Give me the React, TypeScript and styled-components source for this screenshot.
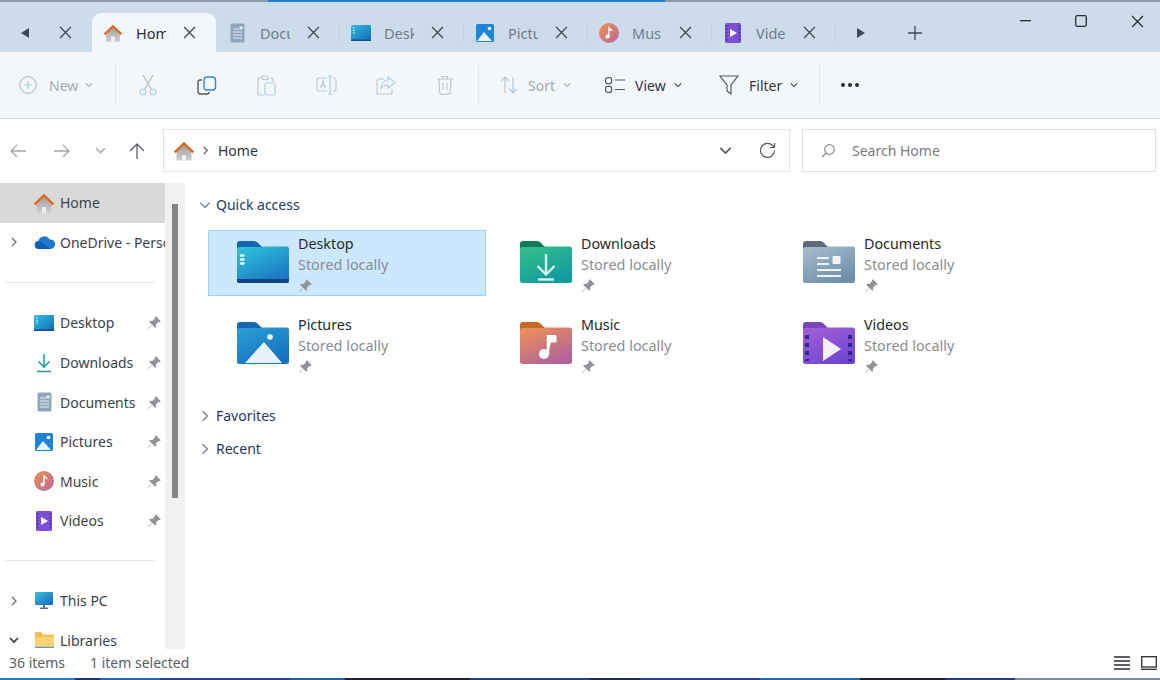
import * as React from 'react';
import styled, { createGlobalStyle } from 'styled-components';

const GlobalStyle = createGlobalStyle`
  html, body {
    margin: 0;
    padding: 0;
    background: #fff;
  }
  * {
    box-sizing: border-box;
  }
`;

const Window = styled.div`
  width: 1160px;
  height: 680px;
  display: flex;
  flex-direction: column;
  overflow: hidden;
  background: #fff;
  font-family: 'Noto Sans', 'Open Sans', sans-serif;
  font-size: 14px;
  color: #3c4149;
`;

const WallpaperStrip = styled.div<{ $h: number; $bg: string }>`
  height: ${p => p.$h}px;
  flex: none;
  background: ${p => p.$bg};
`;

/* ---------- tab strip ---------- */

const TabStrip = styled.div`
  height: 50px;
  flex: none;
  display: flex;
  align-items: flex-end;
  background: #cddcea;
`;

const ScrollTab = styled.div<{ $w: number; $mr?: number }>`
  width: ${p => p.$w}px;
  margin-right: ${p => p.$mr ?? 0}px;
  height: 39px;
  flex: none;
  display: flex;
  align-items: center;
  justify-content: center;
  color: #3f4a57;
`;

const Tab = styled.div<{ $active?: boolean }>`
  width: 124px;
  height: 39px;
  flex: none;
  display: flex;
  align-items: center;
  padding-left: 11px;
  border-radius: 9px 9px 0 0;
  background: ${p => (p.$active ? '#f3f6fb' : 'transparent')};
  position: relative;

  &::after {
    content: '';
    display: ${p => (p.$active ? 'none' : 'block')};
    position: absolute;
    right: 0;
    top: 11px;
    width: 1px;
    height: 17px;
    background: #bfcfde;
  }
`;

const TabIcon = styled.div`
  width: 20px;
  height: 20px;
  flex: none;
  display: flex;
  align-items: center;
  justify-content: center;
`;

const TabLabel = styled.div<{ $active?: boolean }>`
  width: 30px;
  margin-left: 13px;
  flex: none;
  overflow: hidden;
  white-space: nowrap;
  font-size: 14.5px;
  color: ${p => (p.$active ? '#2a2d33' : '#6f7b89')};
`;

const TabClose = styled.div`
  margin-left: 15px;
  width: 16px;
  height: 16px;
  flex: none;
  display: flex;
  align-items: center;
  justify-content: center;
  color: #434a53;
`;

const TabSpacer = styled.div`
  flex: 1;
`;

const WindowControls = styled.div`
  display: flex;
  gap: 10px;
  align-self: flex-start;
  padding-top: 9px;
`;

const WindowButton = styled.div`
  width: 46px;
  height: 20px;
  display: flex;
  align-items: center;
  justify-content: center;
  color: #2a2d33;
`;

/* ---------- command bar ---------- */

const CommandBar = styled.div`
  height: 67px;
  flex: none;
  display: flex;
  align-items: center;
  background: #f3f6fb;
  border-bottom: 1px solid #d3d8de;
`;

const NewButton = styled.div`
  width: 115px;
  flex: none;
  display: flex;
  align-items: center;
  padding-left: 19px;
  color: #a4a9af;
  font-size: 14px;
`;

const NewLabel = styled.span`
  margin-left: 12px;
  margin-right: 7px;
`;

const CommandDivider = styled.div`
  width: 1px;
  height: 40px;
  flex: none;
  background: #e2e6eb;
`;

const IconCommands = styled.div`
  display: flex;
  padding-left: 2px;
  margin-right: 3px;
`;

const IconCommand = styled.div`
  width: 59.5px;
  height: 24px;
  display: flex;
  align-items: center;
  justify-content: center;
`;

const MenuCommands = styled.div`
  display: flex;
  padding-left: 21px;
`;

const MenuCommand = styled.div<{ $muted?: boolean; $w: number }>`
  width: ${p => p.$w}px;
  flex: none;
  display: flex;
  align-items: center;
  color: ${p => (p.$muted ? '#a4a9af' : '#33373d')};
`;

const MenuLabel = styled.span`
  margin-left: 10px;
  margin-right: 8px;
`;

const MoreButton = styled.div`
  margin-left: 21px;
  display: flex;
  align-items: center;
  gap: 3px;
`;

const Dot = styled.span`
  width: 4px;
  height: 4px;
  border-radius: 50%;
  background: #2a2d33;
`;

/* ---------- address row ---------- */

const AddressRow = styled.div`
  height: 64px;
  flex: none;
  display: flex;
  padding-top: 10px;
  background: #fff;
`;

const NavButton = styled.div<{ $w: number }>`
  width: ${p => p.$w}px;
  height: 43px;
  flex: none;
  display: flex;
  align-items: center;
  justify-content: center;
`;

const AddressBox = styled.div`
  width: 627px;
  height: 43px;
  margin-left: 1px;
  flex: none;
  display: flex;
  align-items: center;
  padding-left: 9px;
  border: 1px solid #e0e3e7;
  background: #fff;
  color: #33373d;
`;

const CrumbChevron = styled.span`
  margin-left: 6px;
  display: flex;
  color: #55595f;
`;

const Crumb = styled.span`
  margin-left: 8px;
  flex: 1;
`;

const AddressAction = styled.div<{ $w: number }>`
  width: ${p => p.$w}px;
  flex: none;
  display: flex;
  align-items: center;
  justify-content: center;
`;

const SearchBox = styled.div`
  width: 354px;
  height: 43px;
  margin-left: 12px;
  flex: none;
  display: flex;
  align-items: center;
  padding-left: 18px;
  border: 1px solid #dcdfe3;
  color: #777b81;
`;

const SearchText = styled.span`
  margin-left: 17px;
`;

/* ---------- body ---------- */

const Body = styled.div`
  flex: 1;
  min-height: 0;
  display: flex;
`;

const Sidebar = styled.nav`
  width: 165px;
  flex: none;
  overflow: hidden;
`;

const NavRow = styled.div<{ $active?: boolean }>`
  height: 39.6px;
  display: flex;
  align-items: center;
  background: ${p => (p.$active ? '#d9d9d9' : 'transparent')};
`;

const NavChevron = styled.div`
  width: 30px;
  flex: none;
  display: flex;
  justify-content: center;
  color: #6a6e74;
  padding-right: 2px;
`;

const NavIcon = styled.div`
  width: 28px;
  height: 22px;
  flex: none;
  display: flex;
  align-items: center;
  justify-content: center;
`;

const NavLabel = styled.div`
  margin-left: 2px;
  flex: 1;
  min-width: 0;
  white-space: nowrap;
  overflow: hidden;
  color: #3c4149;
`;

const NavPin = styled.div`
  width: 22px;
  flex: none;
  display: flex;
  justify-content: center;
`;

const NavDivider = styled.div<{ $h: number }>`
  height: ${p => p.$h}px;
  display: flex;
  align-items: center;
  padding: 0 10px 0 5px;

  &::after {
    content: '';
    flex: 1;
    height: 1px;
    background: #e3e3e3;
  }
`;

const ScrollTrack = styled.div`
  width: 20px;
  flex: none;
  padding: 21px 7px 0;
  background: #f1f1f1;
`;

const ScrollThumb = styled.div`
  height: 294px;
  background: #868686;
`;

const Content = styled.main`
  flex: 1;
  padding-top: 5px;
`;

const SectionHeader = styled.div<{ $top?: number }>`
  height: 33px;
  margin-top: ${p => p.$top ?? 0}px;
  display: flex;
  align-items: center;
  padding-left: 14px;
  color: #1f3864;
`;

const SectionTitle = styled.span`
  margin-left: 5px;
`;

const TileGrid = styled.div`
  margin: 9px 0 0 23px;
  display: grid;
  grid-template-columns: repeat(3, 278px);
  grid-auto-rows: 66px;
  column-gap: 5px;
  row-gap: 15px;
`;

const Tile = styled.div<{ $selected?: boolean }>`
  display: flex;
  padding: 3px 0 0 28px;
  border: 1px solid ${p => (p.$selected ? '#99d1ff' : 'transparent')};
  background: ${p => (p.$selected ? '#cce8ff' : 'transparent')};
`;

const TileIcon = styled.div`
  width: 52px;
  height: 42px;
  margin-top: 7px;
  flex: none;
`;

const TileText = styled.div`
  margin-left: 9px;
  display: flex;
  flex-direction: column;
`;

const TileName = styled.div`
  line-height: 20px;
  font-size: 14.3px;
  color: #24282e;
`;

const TileSub = styled.div`
  line-height: 21px;
  font-size: 14.4px;
  color: #8a8d91;
`;

const TilePin = styled.div`
  height: 20px;
  display: flex;
  align-items: center;
`;

/* ---------- status bar ---------- */

const StatusBar = styled.footer`
  height: 29px;
  flex: none;
  display: flex;
  align-items: center;
  padding: 0 3px 2px 9px;
  color: #5a5e64;
`;

const StatusText = styled.span<{ $w?: number }>`
  width: ${p => (p.$w ? `${p.$w}px` : 'auto')};
`;

const StatusIcons = styled.div`
  margin-left: auto;
  display: flex;
  align-items: center;
  gap: 11px;
`;

/* ---------- icons ---------- */

const Chevron = ({ dir = 'down', size = 10, color = 'currentColor', sw = 1.3 }: { dir?: 'down' | 'right'; size?: number; color?: string; sw?: number }) => (
  <svg width={size} height={size} viewBox="0 0 10 10" fill="none" stroke={color} strokeWidth={sw}>
    {dir === 'down' ? <path d="M1 3l4 4 4-4" /> : <path d="M3 1l4 4-4 4" />}
  </svg>
);

const Close = ({ size = 12, sw = 1.2 }: { size?: number; sw?: number }) => (
  <svg width={size} height={size} viewBox="0 0 12 12" fill="none" stroke="currentColor" strokeWidth={sw}>
    <path d="M1 1l10 10M11 1L1 11" />
  </svg>
);

const Pin = () => (
  <svg width="15" height="15" viewBox="0 0 14 14" fill="#8f9296">
    <path d="M8.2 1.2l4.6 4.6-1 .9-.9-.3-2.500 2.500.2 2-1 1-2.700-2.700L1.600 12.800l-.5-.4 3.600-3.300L2 6.400l1-1 2 .2 2.500-2.500-.2-.9z" />
  </svg>
);

const HomeIcon = ({ size = 22 }: { size?: number }) => (
  <svg width={size} height={size} viewBox="0 0 22 22">
    <defs>
      <linearGradient id="home-body" x1="0" y1="0" x2="0" y2="1">
        <stop offset="0" stopColor="#9c9c9c" />
        <stop offset="1" stopColor="#cfcfcf" />
      </linearGradient>
    </defs>
    <path d="M3.500 10L11 3.500l7.500 6.500v10.500H13V15H9v5.500H3.500z" fill="url(#home-body)" />
    <path d="M9 15h4v5.500H9z" fill="#efefef" />
    <path d="M.8 11.500L11 1.800l10.200 9.700-1.700 1.800L11 5.300 2.500 13.300z" fill="#dd6a1e" />
  </svg>
);

const DocIcon = ({ w = 15, h = 20 }: { w?: number; h?: number }) => (
  <svg width={w} height={h} viewBox="0 0 15 20">
    <rect x="0.500" y="0.500" width="14" height="19" rx="1.500" fill="#8ea5bb" />
    <path d="M3 6h6M3 9h9M3 12h9M3 15h9" stroke="#e7edf3" strokeWidth="1" />
    <rect x="9.500" y="3.500" width="3" height="3" fill="#e7edf3" />
  </svg>
);

const DesktopSmall = () => (
  <svg width="20" height="16" viewBox="0 0 20 16">
    <defs>
      <linearGradient id="ds" x1="0" y1="0" x2="1" y2="1">
        <stop offset="0" stopColor="#31c0de" />
        <stop offset="1" stopColor="#1368b8" />
      </linearGradient>
    </defs>
    <rect width="20" height="16" rx="1.500" fill="url(#ds)" />
    <rect y="14.500" width="20" height="1.500" fill="#174a8c" />
    <path d="M2 3h1.500M2 5.500h1.500M2 8h1.500" stroke="#e6f7fc" strokeWidth="1.200" />
  </svg>
);

const PicturesSmall = ({ size = 18 }: { size?: number }) => (
  <svg width={size} height={size} viewBox="0 0 18 18">
    <rect width="18" height="18" rx="1.500" fill="#1d84d6" />
    <circle cx="13.500" cy="4.500" r="1.800" fill="#fff" />
    <path d="M1 17l7-9 8 9z" fill="#e9f3fb" />
  </svg>
);

const MusicSmall = ({ size = 20 }: { size?: number }) => (
  <svg width={size} height={size} viewBox="0 0 20 20">
    <defs>
      <linearGradient id="ms" x1="0" y1="0" x2="1" y2="1">
        <stop offset="0" stopColor="#ee8f4f" />
        <stop offset="1" stopColor="#b86aa0" />
      </linearGradient>
    </defs>
    <circle cx="10" cy="10" r="10" fill="url(#ms)" />
    <circle cx="8.500" cy="13.500" r="2" fill="#fff" />
    <path d="M10 13.500V5c1 1.500 2.500 1.500 3 3" stroke="#fff" strokeWidth="1.300" fill="none" />
  </svg>
);

const VideoSmall = ({ w = 16, h = 20 }: { w?: number; h?: number }) => (
  <svg width={w} height={h} viewBox="0 0 16 20">
    <rect width="16" height="20" rx="1.500" fill="#7d4fd6" />
    <path d="M5 6l7 4-7 4z" fill="#fff" />
    <path d="M1.500 2v16M14.500 2v16" stroke="#3a2a96" strokeWidth="1.400" strokeDasharray="1.500 2" />
  </svg>
);

const DownloadSmall = () => (
  <svg width="18" height="20" viewBox="0 0 18 20" fill="none" stroke="#1ea899" strokeWidth="1.600">
    <path d="M9 1v13M3.500 8.500L9 14l5.500-5.500" />
    <path d="M2 18.500h14" stroke="#3f8fa8" />
  </svg>
);

const CloudIcon = () => (
  <svg width="21" height="14" viewBox="0 0 21 14">
    <path d="M5 14a4 4 0 01-.6-8A6 6 0 0115.500 4.500 4.800 4.800 0 0117 14z" fill="#1a78d0" />
    <path d="M5 14a4 4 0 01-1-7.800c3 .5 6 3 8 4.500l4 3.300z" fill="#0f5fb5" />
  </svg>
);

const MonitorIcon = () => (
  <svg width="18" height="17" viewBox="0 0 18 17">
    <defs>
      <linearGradient id="mon" x1="0" y1="0" x2="1" y2="1">
        <stop offset="0" stopColor="#35c3dc" />
        <stop offset="1" stopColor="#1466bd" />
      </linearGradient>
    </defs>
    <rect width="18" height="13" rx="1" fill="url(#mon)" />
    <path d="M8 13h2v2.500H8zM5 15.500h8V17H5z" fill="#5f6b78" />
  </svg>
);

const LibraryIcon = () => (
  <svg width="19" height="16" viewBox="0 0 19 16">
    <path d="M1 0h5l2 2.500h10a1 1 0 011 1V15a1 1 0 01-1 1H1a1 1 0 01-1-1V1a1 1 0 011-1z" fill="#f2c04e" />
    <path d="M0 5h19v10a1 1 0 01-1 1H1a1 1 0 01-1-1z" fill="#fbd376" />
    <rect y="14.800" width="19" height="1.200" fill="#5b9bd5" />
  </svg>
);

const FOLDERS = {
  desktop: { tab: '#1566b6', from: '#2fc4da', to: '#1a74c2' },
  downloads: { tab: '#157a5a', from: '#34c08a', to: '#0f9aa0' },
  documents: { tab: '#5c6c80', from: '#a6bccd', to: '#6d8ea8' },
  pictures: { tab: '#1566b6', from: '#2a9ed4', to: '#1670c0' },
  music: { tab: '#c66a28', from: '#ee9158', to: '#b0629c' },
  videos: { tab: '#7b45b8', from: '#a45fd8', to: '#6f45d0' },
};

type FolderKind = keyof typeof FOLDERS;

const FolderArt = ({ kind }: { kind: FolderKind }) => {
  switch (kind) {
    case 'desktop':
      return (
        <>
          <path d="M0 38h52v1.500a2.500 2.500 0 01-2.500 2.500h-47A2.500 2.500 0 010 39.500z" fill="#16407f" />
          <path d="M4 14.500h2.500M4 18.500h2.500M4 22.500h2.500" stroke="#e9f8fc" strokeWidth="2.400" strokeLinecap="round" />
        </>
      );
    case 'downloads':
      return (
        <g stroke="#d9f3ee" strokeWidth="2.400" fill="none">
          <path d="M26 13v20M17.500 25l8.500 8.500 8.500-8.500" />
          <path d="M18 38.500h16" />
        </g>
      );
    case 'documents':
      return (
        <g stroke="#eef3f7" strokeWidth="2">
          <path d="M14 17h12M14 23h12M14 29h24M14 35h24" />
          <rect x="29.500" y="15" width="8" height="8" rx="1" fill="#eef3f7" stroke="none" />
        </g>
      );
    case 'pictures':
      return (
        <>
          <circle cx="33" cy="15" r="2.800" fill="#eef7fc" />
          <path d="M8 41L27 20 45 41z" fill="#e8f2fa" />
        </>
      );
    case 'music':
      return (
        <>
          <circle cx="24" cy="32" r="5" fill="#fff" />
          <path d="M28 32V13.500h8V20h-5" fill="#fff" stroke="#fff" strokeWidth="1" />
          <path d="M28 32V13" stroke="#fff" strokeWidth="2.500" />
        </>
      );
    case 'videos':
      return (
        <>
          <path d="M20 15l18 12-18 12z" fill="#f4edfb" />
          <path d="M4 13v26M47 13v26" stroke="#2f2a8c" strokeWidth="4" strokeDasharray="4 4" />
        </>
      );
  }
};

const FolderIcon = ({ kind }: { kind: FolderKind }) => {
  const c = FOLDERS[kind];
  return (
    <svg width="52" height="42" viewBox="0 0 52 42">
      <defs>
        <linearGradient id={`folder-${kind}`} x1="0.1" y1="0" x2="0.7" y2="1">
          <stop offset="0" stopColor={c.from} />
          <stop offset="1" stopColor={c.to} />
        </linearGradient>
      </defs>
      <rect y="5.500" width="52" height="36.500" rx="2.500" fill={`url(#folder-${kind})`} />
      <path d="M0 9V3a3 3 0 013-3h14c2 0 3 1 4.500 2.500L25 6H3a3 3 0 00-3 3z" fill={c.tab} />
      <FolderArt kind={kind} />
    </svg>
  );
};

const ArrowLeft = ({ color }: { color: string }) => (
  <svg width="16" height="14" viewBox="0 0 16 14" fill="none" stroke={color} strokeWidth="1.300">
    <path d="M16 7H1M7 1L1 7l6 6" />
  </svg>
);

const ArrowRight = ({ color }: { color: string }) => (
  <svg width="16" height="14" viewBox="0 0 16 14" fill="none" stroke={color} strokeWidth="1.300">
    <path d="M0 7h15M9 1l6 6-6 6" />
  </svg>
);

const ArrowUp = () => (
  <svg width="16" height="16" viewBox="0 0 16 16" fill="none" stroke="#5c6066" strokeWidth="1.300">
    <path d="M8 16V1M1 8l7-7 7 7" />
  </svg>
);

const tabs: { label: string; icon: React.ReactNode; active?: boolean }[] = [
  { label: 'Home', icon: <HomeIcon />, active: true },
  { label: 'Documents', icon: <DocIcon /> },
  { label: 'Desktop', icon: <DesktopSmall /> },
  { label: 'Pictures', icon: <PicturesSmall /> },
  { label: 'Music', icon: <MusicSmall /> },
  { label: 'Videos', icon: <VideoSmall /> },
];

const pinned: { label: string; icon: React.ReactNode }[] = [
  { label: 'Desktop', icon: <DesktopSmall /> },
  { label: 'Downloads', icon: <DownloadSmall /> },
  { label: 'Documents', icon: <DocIcon /> },
  { label: 'Pictures', icon: <PicturesSmall /> },
  { label: 'Music', icon: <MusicSmall /> },
  { label: 'Videos', icon: <VideoSmall /> },
];

const tiles: { label: string; kind: FolderKind; selected?: boolean }[] = [
  { label: 'Desktop', kind: 'desktop', selected: true },
  { label: 'Downloads', kind: 'downloads' },
  { label: 'Documents', kind: 'documents' },
  { label: 'Pictures', kind: 'pictures' },
  { label: 'Music', kind: 'music' },
  { label: 'Videos', kind: 'videos' },
];

const bottomStrip =
  'linear-gradient(90deg, #1e7fc8 0 75px, #1c3270 75px 100px, #1f6db8 100px 160px, #26418c 160px 290px, #1f5fa8 290px 345px, #1d2230 345px 470px, #2a3f80 470px 590px, #1d2a55 590px 640px, #27408a 640px 760px, #1f6db8 760px 860px, #1d2230 860px 945px, #243a7c 945px 1015px, #7f8f9f 1015px)';

const App = () => (
  <Window>
    <GlobalStyle />
    <WallpaperStrip $h={2} $bg="linear-gradient(90deg, #8f9aa8 0 268px, #1f7fd0 268px 665px, #8f9aa8 665px)" />
    <TabStrip>
      <ScrollTab $w={50}>
        <svg width="10" height="12" viewBox="0 0 10 12" fill="currentColor">
          <path d="M9 1v10L1 6z" />
        </svg>
      </ScrollTab>
      <ScrollTab $w={30} $mr={12}>
        <Close size={13} />
      </ScrollTab>
      {tabs.map(t => (
        <Tab key={t.label} $active={t.active}>
          <TabIcon>{t.icon}</TabIcon>
          <TabLabel $active={t.active}>{t.label}</TabLabel>
          <TabClose>
            <Close size={13} />
          </TabClose>
        </Tab>
      ))}
      <ScrollTab $w={50}>
        <svg width="10" height="12" viewBox="0 0 10 12" fill="currentColor">
          <path d="M1 1v10l8-5z" />
        </svg>
      </ScrollTab>
      <ScrollTab $w={58}>
        <svg width="14" height="14" viewBox="0 0 14 14" stroke="currentColor" strokeWidth="1.300">
          <path d="M7 0v14M0 7h14" />
        </svg>
      </ScrollTab>
      <TabSpacer />
      <WindowControls>
        <WindowButton>
          <svg width="11" height="2" viewBox="0 0 11 2">
            <rect width="11" height="1.300" fill="currentColor" />
          </svg>
        </WindowButton>
        <WindowButton>
          <svg width="12" height="12" viewBox="0 0 12 12" fill="none" stroke="currentColor" strokeWidth="1.300">
            <rect x="0.700" y="0.700" width="10.600" height="10.600" rx="1.500" />
          </svg>
        </WindowButton>
        <WindowButton>
          <Close size={13} />
        </WindowButton>
      </WindowControls>
    </TabStrip>

    <CommandBar>
      <NewButton>
        <svg width="18" height="18" viewBox="0 0 18 18" fill="none" stroke="#b9bec4" strokeWidth="1.200">
          <circle cx="9" cy="9" r="8.300" />
          <path d="M9 5v8M5 9h8" stroke="#a8cbe6" />
        </svg>
        <NewLabel>New</NewLabel>
        <Chevron size={8} />
      </NewButton>
      <CommandDivider />
      <IconCommands>
        <IconCommand>
          <svg width="18" height="22" viewBox="0 0 18 22" fill="none" stroke="#b3d0e8" strokeWidth="1.200">
            <circle cx="4" cy="18" r="3" />
            <circle cx="14" cy="18" r="3" />
            <path d="M5.500 15.500L14 1M12.500 15.500L4 1" stroke="#b9bec4" />
          </svg>
        </IconCommand>
        <IconCommand>
          <svg width="20" height="19" viewBox="0 0 20 19" fill="none" strokeWidth="1.400">
            <path d="M5 4H3a2 2 0 00-2 2v9a3 3 0 003 3h6a2 2 0 002-2" stroke="#55595f" />
            <rect x="7" y="1" width="11.500" height="13" rx="3" stroke="#2f8ad0" />
          </svg>
        </IconCommand>
        <IconCommand>
          <svg width="19" height="21" viewBox="0 0 19 21" fill="none" stroke="#c3c7cc" strokeWidth="1.200">
            <path d="M4 3H2a1 1 0 00-1 1v15a1 1 0 001 1h5M13 3h2a1 1 0 011 1v3" />
            <rect x="5" y="1" width="6" height="3.500" rx="1" />
            <rect x="8" y="8" width="10" height="12" rx="1.500" stroke="#b3d0e8" />
          </svg>
        </IconCommand>
        <IconCommand>
          <svg width="21" height="20" viewBox="0 0 21 20" fill="none" stroke="#c3c7cc" strokeWidth="1.100">
            <path d="M11 3H3a2 2 0 00-2 2v9a2 2 0 002 2h8M17 3h1a2 2 0 012 2v9a2 2 0 01-2 2h-1" />
            <path d="M4.500 13l2.500-7 2.500 7M5.500 10.500h3" />
            <path d="M12 1h2v18h-2M16 1h-2M16 19h-2" stroke="#a8cbe6" />
          </svg>
        </IconCommand>
        <IconCommand>
          <svg width="20" height="19" viewBox="0 0 20 19" fill="none" stroke="#c3c7cc" strokeWidth="1.200">
            <path d="M8 3H3a2 2 0 00-2 2v11a2 2 0 002 2h11a2 2 0 002-2v-3" />
            <path d="M12 1l7 5.500-7 5.500V9C8.500 9 6 10.500 5 13.500c0-6 3-9 7-9.500z" stroke="#b3d0e8" />
          </svg>
        </IconCommand>
        <IconCommand>
          <svg width="18" height="20" viewBox="0 0 18 20" fill="none" stroke="#c3c7cc" strokeWidth="1.200">
            <path d="M1 4h16M6.500 4V1.500h5V4M2.800 4l1 14a1.500 1.500 0 001.500 1.300h7.400a1.500 1.500 0 001.500-1.300l1-14" />
            <path d="M7 8v7M11 8v7" />
          </svg>
        </IconCommand>
      </IconCommands>
      <CommandDivider />
      <MenuCommands>
        <MenuCommand $muted $w={105}>
          <svg width="18" height="18" viewBox="0 0 18 18" fill="none" strokeWidth="1.200">
            <path d="M5 17V1M1 5l4-4 4 4" stroke="#c3c7cc" />
            <path d="M13 1v16M9 13l4 4 4-4" stroke="#a8cbe6" />
          </svg>
          <MenuLabel>Sort</MenuLabel>
          <Chevron size={8} />
        </MenuCommand>
        <MenuCommand $w={114}>
          <svg width="20" height="16" viewBox="0 0 20 16" fill="none" stroke="#55595f" strokeWidth="1.200">
            <rect x="0.600" y="0.600" width="6" height="6" rx="2" />
            <rect x="0.600" y="9.400" width="6" height="6" rx="2" />
            <path d="M10 3h10M10 12.500h10" />
          </svg>
          <MenuLabel>View</MenuLabel>
          <Chevron size={8} />
        </MenuCommand>
        <MenuCommand $w={100}>
          <svg width="20" height="20" viewBox="0 0 20 20" fill="none" stroke="#55595f" strokeWidth="1.200">
            <path d="M1 1h18l-7 9v9l-4-3v-6z" />
          </svg>
          <MenuLabel>Filter</MenuLabel>
          <Chevron size={8} />
        </MenuCommand>
      </MenuCommands>
      <CommandDivider />
      <MoreButton>
        <Dot />
        <Dot />
        <Dot />
      </MoreButton>
    </CommandBar>

    <AddressRow>
      <NavButton $w={36}>
        <ArrowLeft color="#a3a6aa" />
      </NavButton>
      <NavButton $w={52}>
        <ArrowRight color="#a3a6aa" />
      </NavButton>
      <NavButton $w={24}>
        <Chevron size={11} color="#a3a6aa" />
      </NavButton>
      <NavButton $w={50}>
        <ArrowUp />
      </NavButton>
      <AddressBox>
        <HomeIcon />
        <CrumbChevron>
          <Chevron dir="right" size={9} />
        </CrumbChevron>
        <Crumb>Home</Crumb>
        <AddressAction $w={40}>
          <Chevron size={13} color="#55595f" />
        </AddressAction>
        <AddressAction $w={44}>
          <svg width="17" height="17" viewBox="0 0 17 17" fill="none" stroke="#55595f" strokeWidth="1.200">
            <path d="M15.500 8.500a7 7 0 11-2-5L15.500 5.500M15.500 1v4.500H11" />
          </svg>
        </AddressAction>
      </AddressBox>
      <SearchBox>
        <svg width="14" height="14" viewBox="0 0 14 14" fill="none" stroke="#888c92" strokeWidth="1.200">
          <circle cx="8.500" cy="5.500" r="4.800" />
          <path d="M5 9l-4 4" />
        </svg>
        <SearchText>Search Home</SearchText>
      </SearchBox>
    </AddressRow>

    <Body>
      <Sidebar>
        <NavRow $active>
          <NavChevron />
          <NavIcon>
            <HomeIcon />
          </NavIcon>
          <NavLabel>Home</NavLabel>
        </NavRow>
        <NavRow>
          <NavChevron>
            <Chevron dir="right" />
          </NavChevron>
          <NavIcon>
            <CloudIcon />
          </NavIcon>
          <NavLabel>OneDrive - Personal</NavLabel>
        </NavRow>
        <NavDivider $h={41} />
        {pinned.map(p => (
          <NavRow key={p.label}>
            <NavChevron />
            <NavIcon>{p.icon}</NavIcon>
            <NavLabel>{p.label}</NavLabel>
            <NavPin>
              <Pin />
            </NavPin>
          </NavRow>
        ))}
        <NavDivider $h={40} />
        <NavRow>
          <NavChevron>
            <Chevron dir="right" />
          </NavChevron>
          <NavIcon>
            <MonitorIcon />
          </NavIcon>
          <NavLabel>This PC</NavLabel>
        </NavRow>
        <NavRow>
          <NavChevron>
            <Chevron sw={1.6} color="#33373d" />
          </NavChevron>
          <NavIcon>
            <LibraryIcon />
          </NavIcon>
          <NavLabel>Libraries</NavLabel>
        </NavRow>
      </Sidebar>
      <ScrollTrack>
        <ScrollThumb />
      </ScrollTrack>
      <Content>
        <SectionHeader>
          <Chevron size={12} color="#6a7484" sw={1} />
          <SectionTitle>Quick access</SectionTitle>
        </SectionHeader>
        <TileGrid>
          {tiles.map(t => (
            <Tile key={t.label} $selected={t.selected}>
              <TileIcon>
                <FolderIcon kind={t.kind} />
              </TileIcon>
              <TileText>
                <TileName>{t.label}</TileName>
                <TileSub>Stored locally</TileSub>
                <TilePin>
                  <Pin />
                </TilePin>
              </TileText>
            </Tile>
          ))}
        </TileGrid>
        <SectionHeader $top={22}>
          <Chevron dir="right" size={12} color="#6a7484" sw={1} />
          <SectionTitle>Favorites</SectionTitle>
        </SectionHeader>
        <SectionHeader>
          <Chevron dir="right" size={12} color="#6a7484" sw={1} />
          <SectionTitle>Recent</SectionTitle>
        </SectionHeader>
      </Content>
    </Body>

    <StatusBar>
      <StatusText $w={81}>36 items</StatusText>
      <StatusText>1 item selected</StatusText>
      <StatusIcons>
        <svg width="16" height="14" viewBox="0 0 16 14" stroke="#2a2d33" strokeWidth="1.300">
          <path d="M0 1h16M0 5h16M0 9h16M0 13h16" />
        </svg>
        <svg width="16" height="14" viewBox="0 0 16 14" fill="none" stroke="#2a2d33" strokeWidth="1.300">
          <rect x="0.700" y="0.700" width="14.600" height="10.300" />
          <path d="M0 13.300h16" />
        </svg>
      </StatusIcons>
    </StatusBar>
    <WallpaperStrip $h={2} $bg={bottomStrip} />
  </Window>
);

export default App;
